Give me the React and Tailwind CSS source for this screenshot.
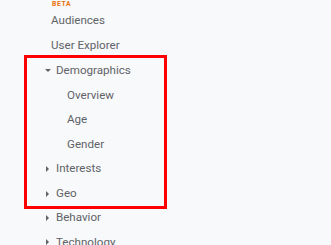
import React from 'react';

const rows = [
  { label: 'Audiences', indent: 'pl-[51px]' },
  { label: 'User Explorer', indent: 'pl-[51px]' },
  { label: 'Demographics', indent: 'pl-[42px]', caret: 'down' },
  { label: 'Overview', indent: 'pl-[67px]' },
  { label: 'Age', indent: 'pl-[67px]' },
  { label: 'Gender', indent: 'pl-[67px]' },
  { label: 'Interests', indent: 'pl-[42px]', caret: 'right' },
  { label: 'Geo', indent: 'pl-[42px]', caret: 'right' },
  { label: 'Behavior', indent: 'pl-[42px]', caret: 'right' },
  { label: 'Technology', indent: 'pl-[42px]', caret: 'right' },
];

function Caret({ dir }) {
  return (
    <span className="mr-[3px] flex h-[11px] w-[11px] items-center justify-center">
      {dir === 'down' ? (
        <svg width="6" height="3" viewBox="0 0 6 3">
          <path d="M0 0h6L3 3z" fill="#5f6368" />
        </svg>
      ) : (
        <svg width="3" height="6" viewBox="0 0 3 6">
          <path d="M0 0v6l3-3z" fill="#5f6368" />
        </svg>
      )}
    </span>
  );
}

function Row({ row }) {
  return (
    <div className={`flex h-[24.56px] items-center ${row.indent}`}>
      {row.caret && <Caret dir={row.caret} />}
      <span className="whitespace-nowrap text-[11.6px] text-[#5f6368]">{row.label}</span>
    </div>
  );
}

export default function App() {
  return (
    <div className="h-[245px] w-[331px] overflow-hidden bg-[#f8f9fa] font-['Roboto',sans-serif]">
      <div className="h-[8.7px] pl-[52px] pt-[0.5px] text-[6.8px] font-bold leading-[6px] tracking-[0.6px] text-[#e8710a]">
        BETA
      </div>
      {rows.slice(0, 2).map((r) => (
        <Row key={r.label} row={r} />
      ))}
      <div className="-mt-[2.8px] ml-[24px] w-[143px] border-[3px] border-[#ff0000] pt-[0.7px]">
        <div className="-ml-[27px]">
          {rows.slice(2, 8).map((r) => (
            <Row key={r.label} row={r} />
          ))}
        </div>
      </div>
      <div className="-mt-[3.4px]">
        {rows.slice(8).map((r) => (
          <Row key={r.label} row={r} />
        ))}
      </div>
    </div>
  );
}
